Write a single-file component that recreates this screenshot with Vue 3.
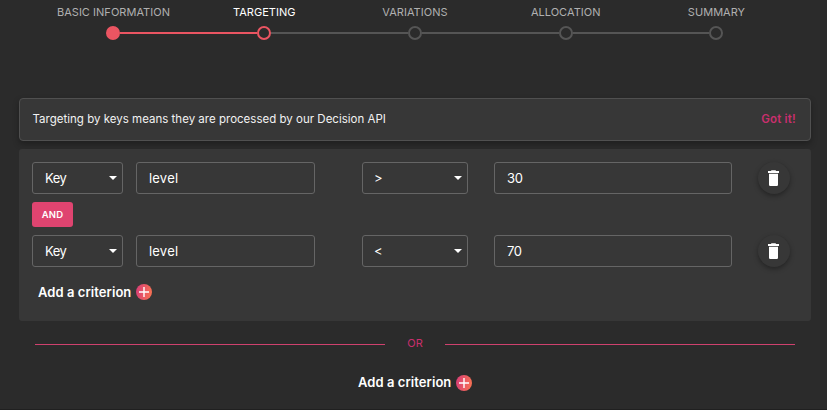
<script setup>
const steps = [
  { label: 'BASIC INFORMATION', state: 'done' },
  { label: 'TARGETING', state: 'current' },
  { label: 'VARIATIONS', state: 'todo' },
  { label: 'ALLOCATION', state: 'todo' },
  { label: 'SUMMARY', state: 'todo' },
]
const criteria = [
  { type: 'Key', name: 'level', operator: '>', value: '30' },
  { type: 'Key', name: 'level', operator: '<', value: '70' },
]
</script>

<template>
  <main class="page">
    <ol class="stepper">
      <li v-for="step in steps" :key="step.label" class="step" :class="step.state">
        <span class="step-label">{{ step.label }}</span>
        <span class="track"><i class="line before"></i><i class="dot"></i><i class="line after"></i></span>
      </li>
    </ol>

    <section class="notice">
      <span class="notice-text">Targeting by keys means they are processed by our Decision API</span>
      <a class="dismiss">Got it!</a>
    </section>

    <section class="group">
      <template v-for="(c, index) in criteria" :key="index">
        <div v-if="index > 0" class="and">AND</div>
        <div class="row">
          <div class="field type">
            <span class="key-text">{{ c.type }}</span>
            <svg class="caret" viewBox="0 0 8 4"><path d="M0 0h8L4 4z" /></svg>
          </div>
          <div class="field name"><span>{{ c.name }}</span></div>
          <div class="field operator">
            <span>{{ c.operator }}</span>
            <svg class="caret" viewBox="0 0 8 4"><path d="M0 0h8L4 4z" /></svg>
          </div>
          <div class="field value"><span class="number">{{ c.value }}</span></div>
          <button class="trash" aria-label="Delete">
            <svg viewBox="0 0 11 16"><path d="M3.200 .2h4.600V1H11v2H0V1h3.200zM1 3.800h9v11q0 1.200-1.200 1.200H2.200Q1 16 1 14.800z" /></svg>
          </button>
        </div>
      </template>
      <div class="add">
        <span>Add a criterion</span>
        <i class="plus"><svg viewBox="0 0 16 16"><path d="M8 3v10M3 8h10" /></svg></i>
      </div>
    </section>

    <div class="or"><i></i><span>OR</span><i></i></div>

    <div class="add outer">
      <span>Add a criterion</span>
      <i class="plus"><svg viewBox="0 0 16 16"><path d="M8 3v10M3 8h10" /></svg></i>
    </div>
  </main>
</template>

<style>
body {
  background: #2b2b2b;
}
</style>

<style scoped>
.page {
  box-sizing: border-box;
  height: 410px;
  overflow: hidden;
  padding: 0 16px 0 19px;
  background: #2b2b2b;
  border-bottom: 1px solid #202020;
  color: #fff;
  font-family: Inter, "Liberation Sans", sans-serif;
}
.stepper {
  display: grid;
  grid-template-columns: repeat(5, 150.750px);
  margin: 0 0 0 19.100px;
  padding: 4px 0 0;
  list-style: none;
}
.step-label {
  display: block;
  height: 22px;
  line-height: 17px;
  font-size: 11px;
  letter-spacing: 0.030px;
  text-align: center;
  white-space: nowrap;
  color: #b0b0b0;
}
.current .step-label {
  color: #fff;
}
.track {
  display: flex;
  align-items: center;
  height: 14px;
}
.line {
  flex: 1;
  height: 2px;
  background: #555;
}
.dot {
  box-sizing: border-box;
  width: 14px;
  height: 14px;
  border: 2px solid #555;
  border-radius: 50%;
}
.done .dot {
  background: #eb5562;
  border-color: #eb5562;
}
.current .dot {
  border-color: #eb5562;
}
.done .after,
.current .before {
  background: #eb5562;
}
.step:first-child .before,
.step:last-child .after {
  background: transparent;
}
.notice {
  box-sizing: border-box;
  display: flex;
  justify-content: space-between;
  align-items: center;
  height: 43px;
  margin-top: 58px;
  padding: 0 14px 1px 12.500px;
  border: 1px solid #505050;
  border-radius: 4px;
  background: #373737;
  box-shadow: 0 3px 6px rgba(0, 0, 0, 0.3);
  font-size: 11.500px;
}
.notice-text {
  letter-spacing: 0.010px;
  color: #f2f2f2;
}
.dismiss {
  color: #c92f6d;
  font-weight: 600;
  letter-spacing: 0.200px;
}
.group {
  box-sizing: border-box;
  height: 172px;
  margin-top: 8px;
  padding: 13px 13px 0;
  border-radius: 3px;
  background: #373737;
}
.row {
  display: flex;
  height: 32px;
}
.field {
  box-sizing: border-box;
  display: flex;
  align-items: center;
  justify-content: space-between;
  height: 32px;
  padding: 0 5px 0 12px;
  border: 1px solid #656565;
  border-radius: 3px;
  font-size: 13px;
  letter-spacing: 0.200px;
}
.key-text {
  letter-spacing: -0.500px;
}
.number {
  letter-spacing: -0.400px;
}
.type {
  width: 91px;
  margin-right: 13px;
}
.name {
  width: 179px;
  margin-right: 47px;
}
.operator {
  width: 106px;
  margin-right: 26px;
  padding-left: 11px;
}
.value {
  width: 238px;
  margin-right: 26px;
}
.caret {
  width: 8px;
  height: 4px;
  fill: #fff;
}
.trash {
  display: flex;
  align-items: center;
  justify-content: center;
  width: 32px;
  height: 32px;
  padding: 0 1px 0 0;
  border: 0;
  border-radius: 50%;
  background: #373737;
  box-shadow: 0 2px 5px rgba(0, 0, 0, 0.35);
}
.trash svg {
  width: 11px;
  height: 16px;
  fill: #fff;
}
.and {
  width: 41px;
  height: 25px;
  margin: 8px 0;
  border-radius: 3px;
  background: #df4470;
  font-size: 9.500px;
  font-weight: 600;
  letter-spacing: 0.200px;
  line-height: 25px;
  text-align: center;
}
.add {
  display: flex;
  align-items: center;
  height: 16px;
  margin: 17px 0 0 6px;
  font-size: 13px;
  font-weight: 600;
  letter-spacing: 0.060px;
  white-space: nowrap;
}
.add > span {
  width: 98px;
}
.plus {
  width: 16px;
  height: 16px;
  border-radius: 50%;
  background: linear-gradient(100deg, #d63b78, #fa7550);
}
.plus svg {
  display: block;
  width: 16px;
  height: 16px;
  fill: none;
  stroke: #fff;
  stroke-width: 1.400;
}
.or {
  display: flex;
  align-items: center;
  height: 16px;
  margin: 14px 16px 0;
}
.or i {
  width: 350px;
  height: 1px;
  margin-top: 2px;
  background: #cf416e;
}
.or span {
  width: 60px;
  color: #c92f6d;
  font-size: 11px;
  text-align: center;
}
.outer {
  margin: 24px 0 0 339px;
}
.outer > span {
  padding-bottom: 2px;
}
</style>
